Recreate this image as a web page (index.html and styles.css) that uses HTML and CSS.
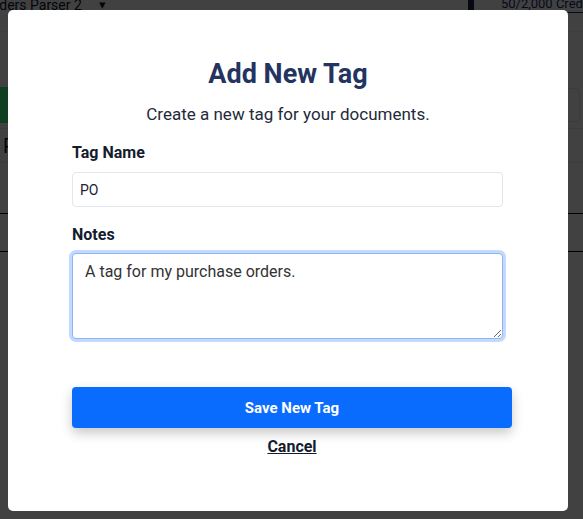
FILE: index.html
```html
<!DOCTYPE html>
<html lang="en">
<head>
<meta charset="utf-8">
<title>Add New Tag</title>
<link rel="stylesheet" href="styles.css">
</head>
<body>
<div class="app">
  <header class="topbar">
    <div class="project">Orders Parser 2 <span class="project-caret">&#9662;</span></div>
    <div class="account">
      <span class="usage-bar"></span>
      <a class="credits">50/2,000 Credits</a>
    </div>
  </header>
  <section class="toolbar">
    <div class="btn-upload"></div>
    <div class="search-box"></div>
  </section>
  <div class="row row-head"><span class="row-title">Parsed Documents</span></div>
  <div class="row row-cols"></div>
  <div class="row row-item"></div>
</div>

<div class="backdrop">
  <div class="modal">
    <h2 class="modal-title">Add New Tag</h2>
    <p class="modal-sub">Create a new tag for your documents.</p>
    <form class="tag-form">
      <label class="field-label">Tag Name</label>
      <input class="text-input" type="text" value="PO">
      <label class="field-label field-notes">Notes</label>
      <textarea class="text-area is-focused">A tag for my purchase orders.</textarea>
      <button class="btn-primary" type="button">Save New Tag</button>
      <div class="cancel-wrap"><a class="cancel">Cancel</a></div>
    </form>
  </div>
</div>
</body>
</html>
```

FILE: styles.css
```css
* { box-sizing: border-box; }

html, body {
  margin: 0;
  height: 519px;
  overflow: hidden;
  background: #ffffff;
  font-family: Roboto, "Liberation Sans", sans-serif;
}

/* ---------- app behind the modal ---------- */
.app {
  width: 583px;
  overflow: hidden;
}

.topbar {
  height: 32px;
  border-bottom: 1px solid #f4f4f4;
  display: flex;
  justify-content: space-between;
  align-items: flex-start;
}

.project {
  margin: -5px 0 0 -15px;
  font-size: 14px;
  line-height: 20px;
  color: #0c1530;
  white-space: nowrap;
}

.project-caret {
  font-size: 13px;
  margin-left: 14px;
  vertical-align: 1px;
}

.account {
  display: flex;
  align-items: flex-start;
  margin-right: -22px;
}

.usage-bar {
  width: 6px;
  height: 11px;
  background: #1a2244;
  margin-right: 27px;
}

.credits {
  margin-top: -4px;
  font-size: 13px;
  line-height: 16px;
  color: #13286e;
  border-bottom: 1px solid #13286e;
  white-space: nowrap;
  padding-right: 8px;
}

.toolbar {
  height: 97px;
  border-bottom: 1px solid #f0f0f0;
  display: flex;
  justify-content: space-between;
  align-items: flex-start;
  padding-top: 55px;
}

.btn-upload {
  width: 160px;
  height: 36px;
  background: #3ff27f;
}

.search-box {
  width: 120px;
  height: 34px;
  margin-top: 1px;
  margin-right: 3px;
  border: 1px solid #e6e6e6;
  border-radius: 4px;
}

.row-head {
  height: 34px;
  border-bottom: 1px solid #f0f0f0;
  padding-left: 3px;
}

.row-title {
  font-size: 20px;
  line-height: 34px;
  color: #3a0c0c;
}

.row-cols {
  height: 51px;
  border-bottom: 1px solid #000000;
}

.row-item {
  height: 38px;
  border-bottom: 1px solid #000000;
}

/* ---------- modal ---------- */
.backdrop {
  position: fixed;
  inset: 0;
  background: rgba(0, 0, 0, 0.745);
}

.modal {
  width: 560px;
  height: 501px;
  margin: 10px 0 0 8px;
  background: #ffffff;
  border-radius: 5px;
  padding-top: 48px;
}

.modal-title {
  margin: 0;
  text-align: center;
  font-size: 27px;
  line-height: 32px;
  font-weight: 700;
  color: #243461;
}

.modal-sub {
  margin: 12px 0 0;
  text-align: center;
  font-size: 17px;
  line-height: 24px;
  color: #232a3a;
}

.tag-form {
  width: 440px;
  margin: 15px 0 0 64px;
  display: flex;
  flex-direction: column;
  align-items: flex-start;
}

.field-label {
  font-size: 16px;
  line-height: 24px;
  font-weight: 700;
  color: #141c2e;
}

.field-notes {
  margin-top: 16px;
}

.text-input {
  margin-top: 7px;
  width: 98%;
  height: 35px;
  padding: 0 7px;
  border: 1px solid #e3e6ee;
  border-radius: 4px;
  font-family: Roboto, "Liberation Sans", sans-serif;
  font-size: 14px;
  color: #1c2130;
  background: #ffffff;
  outline: none;
}

.text-area {
  margin-top: 6px;
  width: 98%;
  height: 86px;
  padding: 8px 12px;
  border: 1px solid #8cb4f6;
  border-radius: 4px;
  font-family: Roboto, "Liberation Sans", sans-serif;
  font-size: 16px;
  color: #333333;
  background: #ffffff;
  outline: none;
  resize: vertical;
}

.text-area.is-focused {
  box-shadow: 0 0 0 3px #c4dafc;
}

.btn-primary {
  margin-top: 48px;
  width: 100%;
  height: 41px;
  border: none;
  border-radius: 4px;
  background: #0a6cff;
  color: #ffffff;
  font-family: Roboto, "Liberation Sans", sans-serif;
  font-size: 15px;
  font-weight: 700;
  box-shadow: 0 5px 12px rgba(0, 0, 0, 0.22);
}

.cancel-wrap {
  width: 100%;
  margin-top: 7px;
  text-align: center;
}

.cancel {
  font-size: 16px;
  line-height: 24px;
  font-weight: 700;
  color: #141c2e;
  text-decoration: underline;
  cursor: pointer;
}
```
